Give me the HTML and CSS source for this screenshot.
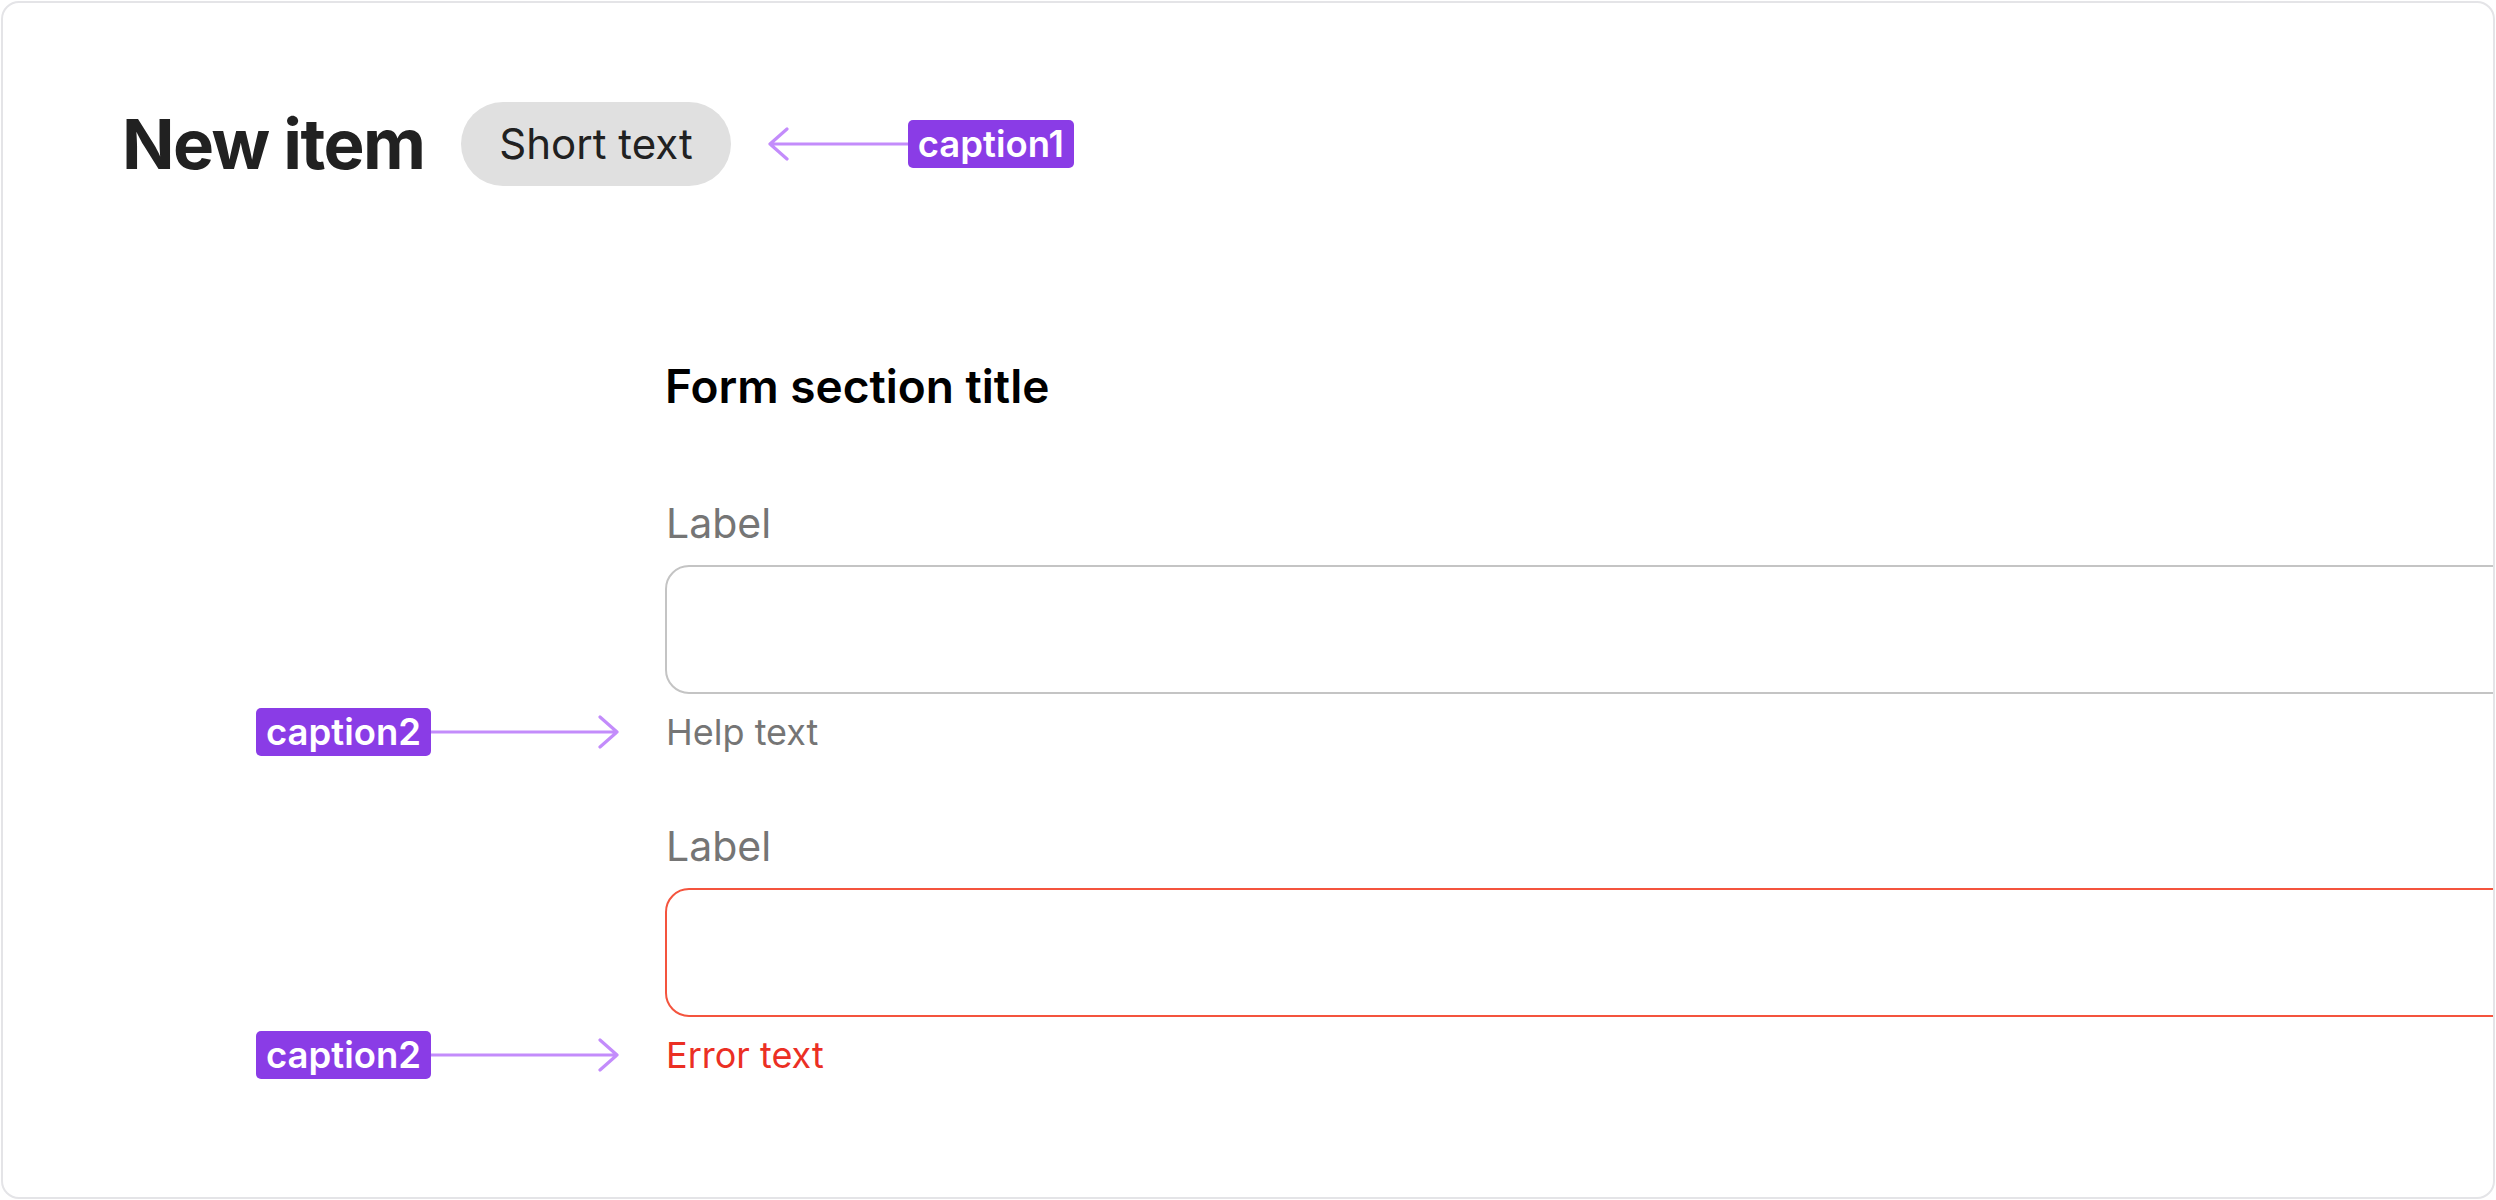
FILE: index.html
```html
<!DOCTYPE html>
<html lang="en">
<head>
<meta charset="utf-8">
<title>New item</title>
<link rel="stylesheet" href="styles.css">
</head>
<body>
<div class="card">
  <header class="page-header">
    <h1 class="page-title">New item</h1>
    <span class="chip">Short text</span>
    <div class="note note-left">
      <svg class="arrow arrow-left" width="140" height="36" viewBox="0 0 140 36" aria-hidden="true">
        <path d="M2 18 H140 M19 3 L2 18 L19 33" fill="none" stroke="#c38cfb" stroke-width="3.2" stroke-linecap="round" stroke-linejoin="round"/>
      </svg>
      <span class="tag">caption1</span>
    </div>
  </header>

  <section class="form">
    <div class="gutter"></div>
    <h2 class="section-title">Form section title</h2>

    <div class="gutter"></div>
    <div class="field">
      <label class="field-label">Label</label>
      <div class="input"></div>
    </div>

    <div class="gutter note note-right">
      <span class="tag">caption2</span>
      <svg class="arrow" width="188" height="36" viewBox="0 0 188 36" aria-hidden="true">
        <path d="M0 18 H186 M169 3 L186 18 L169 33" fill="none" stroke="#c38cfb" stroke-width="3.2" stroke-linecap="round" stroke-linejoin="round"/>
      </svg>
    </div>
    <p class="help">Help text</p>

    <div class="gutter"></div>
    <div class="field field-second">
      <label class="field-label">Label</label>
      <div class="input input-error"></div>
    </div>

    <div class="gutter note note-right">
      <span class="tag">caption2</span>
      <svg class="arrow" width="188" height="36" viewBox="0 0 188 36" aria-hidden="true">
        <path d="M0 18 H186 M169 3 L186 18 L169 33" fill="none" stroke="#c38cfb" stroke-width="3.2" stroke-linecap="round" stroke-linejoin="round"/>
      </svg>
    </div>
    <p class="help help-error">Error text</p>
  </section>
</div>
</body>
</html>
```

FILE: styles.css
```css
html, body {
  margin: 0;
  padding: 0;
  background: #ffffff;
}

body {
  font-family: Inter, "Noto Sans", "Liberation Sans", sans-serif;
  color: #212121;
}

.card {
  margin: 1px;
  height: 1198px;
  box-sizing: border-box;
  border: 2px solid #e4e4e7;
  border-radius: 18px;
  background: #ffffff;
  overflow: hidden;
  padding: 99px 0 0 119px;
}

.page-header {
  display: flex;
  align-items: center;
  height: 84px;
}

.page-title {
  margin: 0 37px 0 0;
  font-size: 69px;
  font-weight: 700;
  letter-spacing: -1.6px;
  line-height: 84px;
  color: #212121;
}

.chip {
  display: inline-flex;
  align-items: center;
  height: 84px;
  padding: 0 38px 0 38px;
  border-radius: 42px;
  background: #e0e0e0;
  font-size: 42px;
  line-height: 48px;
  color: #212121;
}

.note {
  display: flex;
  align-items: center;
}

.note-left {
  margin-left: 37px;
}

.arrow {
  display: block;
  flex: none;
}

.tag {
  display: inline-flex;
  align-items: center;
  flex: none;
  height: 48px;
  padding: 0 10px;
  border-radius: 5px;
  background: #8a3ce6;
  color: #ffffff;
  font-size: 36.5px;
  font-weight: 600;
  line-height: 48px;
  white-space: nowrap;
}

.form {
  display: grid;
  grid-template-columns: 543px 1900px;
  margin-top: 173px;
}

.section-title {
  margin: 0;
  font-size: 46px;
  font-weight: 600;
  line-height: 54px;
  color: #000000;
}

.field {
  display: flex;
  flex-direction: column;
  margin-top: 86px;
}

.field-second {
  margin-top: 68px;
}

.field-label {
  font-size: 41px;
  line-height: 48px;
  color: #757575;
  padding-left: 1px;
}

.input {
  margin-top: 18px;
  height: 129px;
  box-sizing: border-box;
  border: 2px solid #c4c4c4;
  border-radius: 24px;
  background: #ffffff;
}

.input-error {
  border-color: #f4543e;
}

.note-right {
  justify-content: flex-end;
  padding-right: 46px;
  margin-top: 16px;
  height: 44px;
}

.help {
  margin: 16px 0 0;
  font-size: 36px;
  line-height: 44px;
  color: #757575;
  padding-left: 1px;
}

.help-error {
  color: #eb2f24;
}
```
